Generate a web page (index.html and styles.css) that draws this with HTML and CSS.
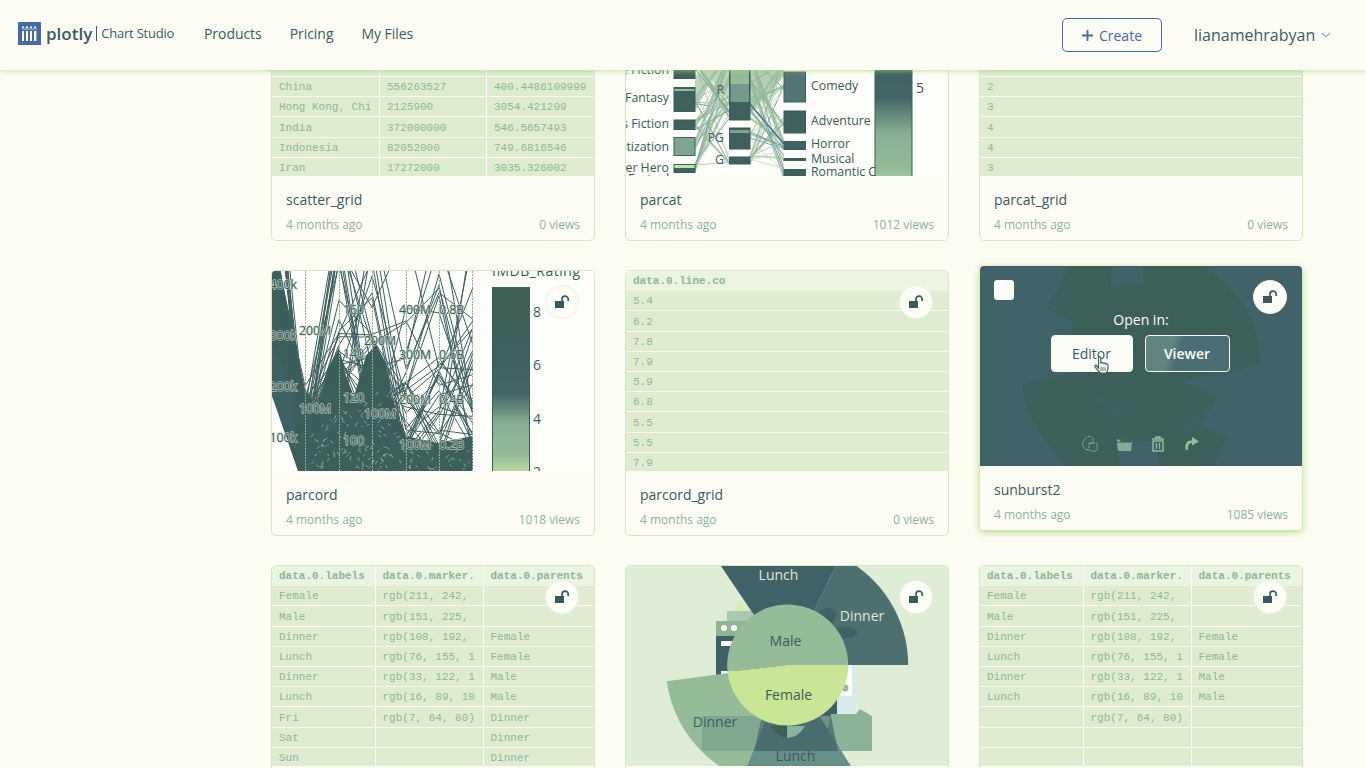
FILE: index.html
```html
<!DOCTYPE html>
<html lang="en">
<head>
<meta charset="utf-8">
<title>Chart Studio</title>
<link rel="stylesheet" href="styles.css">
</head>
<body>
<svg width="0" height="0" class="defs">
  <defs>
    <linearGradient id="scale" x1="0" y1="0" x2="0" y2="1">
      <stop offset="0" stop-color="#3d5f55"/><stop offset=".18" stop-color="#3d5f55"/>
      <stop offset=".4" stop-color="#3e6062"/><stop offset=".56" stop-color="#426567"/>
      <stop offset=".72" stop-color="#88b095"/><stop offset=".88" stop-color="#95bb98"/>
      <stop offset="1" stop-color="#c4e5a0"/>
    </linearGradient>
    <symbol id="lock" viewBox="0 0 16 14">
      <path d="M1 6h9v7H1z" fill="#3b5a5c"/>
      <path d="M8 6V4.200a3.100 3.100 0 0 1 6.200 0V6" fill="none" stroke="#3b5a5c" stroke-width="1.700"/>
    </symbol>
  </defs>
</svg>
<header class="topbar">
  <div class="brand">
    <svg class="logo" viewBox="0 0 23 23"><rect width="23" height="23" fill="#4669a8"/>
      <g fill="#fdfdff"><rect x="4" y="9" width="2" height="10"/><rect x="8" y="9" width="2" height="10"/><rect x="12" y="9" width="2" height="10"/><rect x="16" y="9" width="2.400" height="10"/>
      <rect x="4" y="4.500" width="2" height="1.500"/><rect x="8" y="4.500" width="2" height="1.500"/><rect x="12" y="4.500" width="2" height="1.500"/><rect x="16" y="4.500" width="2" height="1.500"/></g>
      <path d="M4 7h15" stroke="#b5c6e4" stroke-width="1"/></svg>
    <span class="wordmark">plotly</span><span class="product">Chart Studio</span>
  </div>
  <nav class="nav"><a>Products</a><a>Pricing</a><a>My Files</a></nav>
  <button class="create"><svg width="11" height="11" viewBox="0 0 11 11"><path d="M5.500 0v11M0 5.500h11" stroke="#4669a8" stroke-width="1.800"/></svg>Create</button>
  <div class="user"><span>lianamehrabyan</span><svg width="10" height="6" viewBox="0 0 10 6"><path d="M1 1l4 4 4-4" fill="none" stroke="#84ad9a" stroke-width="1.200"/></svg></div>
</header>
<main class="content">
  <div class="grid">
    <article class="card">
      <div class="thumb" data-table="scatter"></div>
      <div class="info"><h2>scatter_grid</h2><p><span>4 months ago</span><span>0 views</span></p></div>
    </article>
    <article class="card">
      <div class="thumb white">
        <svg class="chart" viewBox="0 0 322 200">
          <g id="ribbons" fill="none"></g>
          <g fill="#3e605f" stroke="#3d5f55">
            <rect x="48" y="80" width="21" height="22.500"/><rect x="48" y="111.500" width="21" height="24"/><rect x="48" y="144" width="21" height="9.500"/><rect x="48" y="161.500" width="21" height="18" fill="#7fa494"/><rect x="48" y="188.500" width="21" height="8"/>
            <rect x="103.500" y="60" width="20.500" height="84"/><rect x="103.500" y="152" width="20.500" height="21"/><rect x="103.500" y="181" width="20.500" height="7"/>
            <rect x="158" y="96" width="21.500" height="30" fill="#527675"/><rect x="158" y="135" width="21.500" height="22"/><rect x="158" y="165.500" width="21.500" height="8"/><rect x="158" y="182.500" width="21.500" height="2"/><rect x="158" y="193.500" width="21.500" height="8"/>
          </g>
          <rect x="104.500" y="94" width="18.500" height="14" fill="#95bb98"/><rect x="104.500" y="108" width="18.500" height="18" fill="#76998d"/>
          <rect x="48.500" y="113" width="20" height="2" fill="#95bb98"/><rect x="48.500" y="189" width="20" height="3" fill="#c4e5a0"/><rect x="104" y="154" width="19.500" height="3" fill="#7fa494"/>
          <rect class="bar" x="249" y="-5" width="37" height="226"/>
          <g class="lbl"><g text-anchor="end"><text x="43" y="98">Science Fiction</text><text x="43" y="126">Fantasy</text><text x="43" y="151.500">Kids Fiction</text><text x="43" y="174.500">Dramatization</text><text x="43" y="195.500">Super Hero</text><text x="43" y="207">Factual</text>
          <text x="98" y="117.500">R</text><text x="98" y="165.500">PG</text><text x="98" y="188">G</text></g>
          <text x="185" y="114">Comedy</text><text x="185" y="149">Adventure</text><text x="185" y="172">Horror</text><text x="185" y="187">Musical</text><text x="185" y="200">Romantic C</text></g>
          <text class="tick" x="290" y="117">5</text>
        </svg>
      </div>
      <div class="info"><h2>parcat</h2><p><span>4 months ago</span><span>1012 views</span></p></div>
    </article>
    <article class="card">
      <div class="thumb" data-table="parcat"></div>
      <div class="info"><h2>parcat_grid</h2><p><span>4 months ago</span><span>0 views</span></p></div>
    </article>
    <article class="card">
      <div class="thumb white">
        <svg class="chart" viewBox="0 0 322 200">
          <svg width="201" height="200">
            <path d="M0 0H6L17 42 33 118 45 135 56 100 67 76 74 105 82 125 94 85 104 74 113 90 121 130 134 165 165 172 201 165V200H26L0 125Z" fill="#3d5f5a"/>
            <path d="M0 75L10 95 20 130 25 185 0 125Z" fill="#3f6166"/>
            <g id="lines" fill="none"></g>
            <path d="M33.500 0V200M67.500 0V200M100.500 0V200M134.500 0V200M167.500 0V200M200.500 0V200" stroke="#8fb39a" stroke-dasharray="2 1"/>
          </svg>
          <g class="lbl halo"><g text-anchor="end"><text x="25" y="18">400k</text><text x="25" y="68.500">300k</text><text x="25" y="119.500">200k</text><text x="25" y="170.500">100k</text></g>
          <text x="27" y="64">200M</text><text x="27" y="142">100M</text><text x="71" y="43">160</text><text x="71" y="87">140</text><text x="71" y="131">120</text><text x="71" y="174">100</text>
          <text x="92" y="74">200M</text><text x="92" y="147">100M</text><text x="127" y="43">400M</text><text x="127" y="88">300M</text><text x="127" y="132.500">200M</text><text x="127" y="178">100M</text>
          <text x="167" y="43">0.8B</text><text x="167" y="88">0.6B</text><text x="167" y="132.500">0.4B</text><text x="167" y="178">0.2B</text></g>
          <rect class="bar" x="220.500" y="16.500" width="37" height="190"/>
          <g class="tick"><text x="261" y="45.500">8</text><text x="261" y="99">6</text><text x="261" y="152.500">4</text><text x="261" y="206">2</text><text x="220" y="4.500" textLength="88">IMDB_Rating</text></g>
        </svg>
        <span class="badge"><svg class="lock"><use href="#lock"/></svg></span>
      </div>
      <div class="info"><h2>parcord</h2><p><span>4 months ago</span><span>1018 views</span></p></div>
    </article>
    <article class="card">
      <div class="thumb" data-table="parcord"><span class="badge"><svg class="lock"><use href="#lock"/></svg></span></div>
      <div class="info"><h2>parcord_grid</h2><p><span>4 months ago</span><span>0 views</span></p></div>
    </article>
    <article class="card active">
      <div class="thumb overlay">
        <svg class="chart" viewBox="0 0 322 200"><g fill="#3d5f5a">
          <path d="M67 42L90 0H133L130 20 163 18V0H223Q280 38 280 99L201 115 237 130 220 160 247 170 234 200H178L177 176 137 172 140 200H87Q48 162 42 119L88 107 92 55Z"/></g>
          <path d="M115 130l30 25M205 165l22-22" stroke="#48698b" stroke-width="5" stroke-dasharray="1 2" opacity=".3"/></svg>
        <span class="check"></span>
        <span class="badge"><svg class="lock"><use href="#lock"/></svg></span>
        <div class="actions">
          <div class="open">Open in:</div>
          <div class="buttons"><button class="editor">Editor</button><button class="viewer">Viewer</button></div>
          <div class="tools">
            <svg viewBox="0 0 18 18"><g fill="none" stroke="#95bb98" stroke-dasharray="2 1"><path d="M7 15C2 14 0 9 3 5S10 0 12 4v4H8"/><rect x="8" y="8" width="8" height="8" rx="1"/></g></svg>
            <svg viewBox="0 0 18 18"><path d="M2 4l3 1 1 2h11l-1 9H3L2 9Z" fill="#86ab98"/><path d="M1 7h15" stroke="#3d5f57"/></svg>
            <svg viewBox="0 0 18 18"><path d="M3 4h12M7 4V2h4v2M4 6h10v10H4Z" fill="none" stroke="#95bb98" stroke-width="1.500"/><path d="M7.500 8v6M10.500 8v6" stroke="#95bb98" stroke-width="1.300"/></svg>
            <svg viewBox="0 0 18 18"><path d="M3 15C1 9 4 5 9 5.500V2l7 4.500-7 4V8C6 8 5 10 5 15Z" fill="#95bb98"/></svg>
          </div>
        </div>
        <svg class="cursor" viewBox="0 0 15 18"><path d="M4.500 12V2Q4.500.7 5.600.7T6.800 2V7Q9 5.800 9.500 7.500 11.500 6.500 12 8 14 7.500 14 9.500V13L12.500 17H6L1 11Q.5 9 2 9Z" fill="#fdfdff" stroke="#3d5f55" stroke-width="1.200"/><path d="M7 11v4M9 11v4M11 11v4" stroke="#3d5f55" stroke-width=".8"/></svg>
      </div>
      <div class="info"><h2>sunburst2</h2><p><span>4 months ago</span><span>1085 views</span></p></div>
    </article>
    <article class="card">
      <div class="thumb" data-table="sunA"><span class="badge"><svg class="lock"><use href="#lock"/></svg></span></div>
      <div class="info"></div>
    </article>
    <article class="card">
      <div class="thumb">
        <svg class="chart" viewBox="0 0 322 200">
          <rect width="322" height="200" fill="#dfecd6"/>
          <path d="M112 35l14 6v6h-18Z" fill="#d5eebc"/>
          <rect x="101" y="45" width="40" height="12" fill="#a9c9ad"/><rect x="90" y="55" width="110" height="15" fill="#8fb496"/>
          <rect x="90" y="70" width="131" height="80" fill="#3f6166"/><rect x="95" y="75" width="14" height="5" fill="#fdfdff"/><rect x="95" y="105" width="14" height="5" fill="#fdfdff"/>
          <circle cx="98" cy="62" r="3" fill="#fdfdff"/><circle cx="108" cy="62" r="3" fill="#fdfdff"/>
          <g fill="#7fa494"><rect x="95" y="119" width="22" height="5"/><rect x="95" y="129" width="26" height="5"/><rect x="105" y="139" width="20" height="5"/></g>
          <rect x="208" y="99" width="18" height="31" fill="#fdfdff"/><path d="M226 99h5v49h-20v-18h15Z" fill="#d8edea"/><circle cx="219" cy="122" r="3.500" fill="#95bb98"/>
          <path d="M205 148h25l4-5 12 7v35h-50Z" fill="#8db29a"/>
          <g id="sun"></g>
          <path d="M76 150H136L128 185H76Z" fill="#55797f" opacity=".3"/><path d="M136 150H205L212 185H128Z" fill="#3a5c62" opacity=".65"/>
          <path d="M188 48q16-12 23 0-7 11-3 16 18-8 24 3-10 9-24 3-9-15-20-22Z" fill="#3f6166"/>
          <path d="M144 160h17v12q-8 0-17-12Z" fill="#3d5f55"/><path d="M161 160h18q-7 12-18 12Z" fill="#8db29a"/>
          <g id="core"></g>
          <g class="lbl big" text-anchor="middle"><text x="152.500" y="14" class="pale">Lunch</text><text x="236" y="55" class="pale">Dinner</text><text x="159.500" y="80">Male</text><text x="162.500" y="134">Female</text><text x="89" y="161">Dinner</text><text x="169.500" y="195">Lunch</text></g>
        </svg>
        <span class="badge"><svg class="lock"><use href="#lock"/></svg></span>
      </div>
      <div class="info"></div>
    </article>
    <article class="card">
      <div class="thumb" data-table="sunB"><span class="badge"><svg class="lock"><use href="#lock"/></svg></span></div>
      <div class="info"></div>
    </article>
  </div>
</main>
<script src="app.js"></script>
</body>
</html>
```
FILE: styles.css
```css
* { box-sizing: border-box; }
body { margin: 0; height: 768px; overflow: hidden; display: flex; flex-direction: column; background: #fcfdf2; font-family: "Open Sans", sans-serif; color: #3b5b5c; }
button { font: inherit; margin: 0; padding: 0; }
.defs { position: absolute; }
.topbar { position: relative; z-index: 5; flex: none; height: 70px; padding: 0 35px 3px 18px; display: flex; align-items: center; background: #fdfdf5; box-shadow: 0 1px 5px rgba(172, 212, 120, .7); }
.brand { width: 186px; display: flex; align-items: center; }
.logo { width: 23px; height: 23px; margin-right: 5px; }
.wordmark { font-weight: 600; font-size: 17px; line-height: 20px; margin-right: 4px; }
.product { font-size: 13px; line-height: 15px; border-left: 1px solid #3b5b60; padding-left: 4px; letter-spacing: -.22px; }
.nav { display: flex; gap: 28px; font-size: 14px; line-height: 19px; letter-spacing: -.05px; }
.create { margin-left: auto; width: 100px; height: 34px; margin-top: 3px; border: 1px solid #4669a8; border-radius: 5px; background: transparent; color: #4669a8; display: flex; align-items: center; justify-content: center; gap: 6px; font-size: 14px; }
.user { width: 137px; margin: 3px 0 0 32px; display: flex; align-items: center; justify-content: space-between; font-size: 16px; white-space: nowrap; }
.content { flex: 1; overflow: hidden; padding-left: 271px; }
.grid { display: grid; grid-template-columns: repeat(3, 324px); grid-auto-rows: 266px; gap: 29px 30px; margin-top: -95px; }
.card { border: 1px solid #d3e8c4; border-radius: 5px; background: #fdfdf5; overflow: hidden; display: flex; flex-direction: column; }
.card.active { transform: translateY(-5px); border-color: transparent; background-clip: padding-box; box-shadow: 0 2px 6px rgba(180, 216, 130, .85); }
.thumb { position: relative; height: 200px; flex: none; overflow: hidden; }
.white { background: #fdfdf9; }
.chart { display: block; width: 322px; height: 200px; overflow: hidden; }
.info { padding: 14px 14px 0; }
.info h2 { margin: 0; font-size: 14px; line-height: 19px; font-weight: 400; }
.info p { margin: 8px 0 0; display: flex; justify-content: space-between; font-size: 12px; line-height: 16px; color: #8db39a; }
.row { display: grid; height: 20.2px; gap: 1px; }
.row span { height: 20.2px; padding: 1.3px 0 0 7px; border-bottom: 1px solid #f7faed; background: #dfecd2; color: #8fb596; font: 11px/19px "Liberation Mono", monospace; white-space: pre; overflow: hidden; }
.row.head span { background: #eaf4e0; font-weight: 700; border: 0; }
.wide { grid-template-columns: 107px 106px 107px; }
.three { grid-template-columns: 102.5px 107px 110.5px; }
.one { grid-template-columns: 1fr; }
.badge { position: absolute; top: 14px; right: 15px; width: 34px; height: 34px; border-radius: 50%; background: #fcfdf5; border: 1px solid #eaf1e3; display: flex; align-items: center; justify-content: center; }
.lock { width: 16px; height: 14px; }
.overlay { background: #406268; }
.check { position: absolute; top: 14px; left: 14px; width: 20px; height: 20px; border-radius: 3px; background: #fdfdf8; }
.actions { position: absolute; inset: 0; display: flex; flex-direction: column; align-items: center; color: #fdfdf8; font-size: 14px; }
.open { margin-top: 44px; line-height: 20px; }
.buttons { display: flex; gap: 12px; margin: 5px 2px 0 0; }
.editor, .viewer { height: 37px; border-radius: 4px; border: 1px solid #f4f8ee; }
.editor { width: 82px; background: #fdfdf8; color: #3b5b68; }
.viewer { width: 85px; background: linear-gradient(110deg, #618581 0 30%, #4b6d74 42%); color: #fdfdf8; font-weight: 600; }
.tools { display: flex; gap: 16px; margin: 63px 0 0 0; }
.tools svg { width: 18px; height: 18px; }
.cursor { position: absolute; left: 114px; top: 90px; width: 15px; height: 18px; }
.bar { fill: url(#scale); stroke: #3d5f55; }
.lbl { font-size: 12.3px; fill: #3b5b5c; }
.halo { paint-order: stroke; stroke: #cfdfcf; stroke-width: 1.5px; stroke-opacity: .8; }
.big { font-size: 14px; }
.pale { fill: #dfecd6; }
.tick { font-size: 14px; fill: #3b5b5c; }
```
FILE: app.js
```javascript
const NS = 'http://www.w3.org/2000/svg';
const labels = ['Female', 'Male', 'Dinner', 'Lunch', 'Dinner', 'Lunch'];
const colors = ['rgb(211, 242,', 'rgb(151, 225,', 'rgb(108, 192,', 'rgb(76, 155, 1', 'rgb(33, 122, 1', 'rgb(16, 89, 10', 'rgb(7, 64, 80)', '', ''];
const sunHead = ['data.0.labels', 'data.0.marker.', 'data.0.parents'];
const parentsA = ['', '', 'Female', 'Female', 'Male', 'Male', 'Dinner', 'Dinner', 'Dinner'];
const tables = {
  scatter: { cls: 'wide', rows: [['country', 'pop', 'gdpPercap'], ['Afghanistan', '8425333', '779.4453145'], ['Bahrain', '120447', '9867.084765'], ['Bangladesh', '46886859', '684.2441716'], ['Cambodia', '4693836', '368.4692856001'], ['China', '556263527', '400.4486109999'], ['Hong Kong, Chi', '2125900', '3054.421209'], ['India', '372000000', '546.5657493'], ['Indonesia', '82052000', '749.6816546'], ['Iran', '17272000', '3035.326002']] },
  parcat: { cls: 'one', rows: ['data', '1', '2', '3', '2', '2', '3', '4', '4', '3'].map(v => [v]) },
  parcord: { cls: 'one', rows: ['data.0.line.co', '5.4', '6.2', '7.8', '7.9', '5.9', '6.8', '5.5', '5.5', '7.9'].map(v => [v]) },
  sunA: { cls: 'three', rows: [sunHead].concat(colors.map((c, i) => [[...labels, 'Fri', 'Sat', 'Sun'][i], c, parentsA[i]])) },
  sunB: { cls: 'three', rows: [sunHead].concat(colors.map((c, i) => [labels[i] || '', c, i < 6 ? parentsA[i] : ''])) }
};
document.querySelectorAll('[data-table]').forEach(el => {
  const t = tables[el.dataset.table];
  const box = document.createElement('div');
  t.rows.forEach((r, i) => {
    const row = document.createElement('div');
    row.className = 'row ' + t.cls + (i ? '' : ' head');
    r.forEach(v => { const s = document.createElement('span'); s.textContent = v; row.append(s); });
    box.append(row);
  });
  el.prepend(box);
});

let seed = 11;
const rnd = () => (seed = (seed * 16807) % 2147483647) / 2147483647;
function path(parent, d, stroke, width, opacity, fill) {
  const p = document.createElementNS(NS, 'path');
  p.setAttribute('d', d);
  if (stroke) { p.setAttribute('stroke', stroke); p.setAttribute('stroke-width', width); }
  if (fill) p.setAttribute('fill', fill);
  p.setAttribute('opacity', opacity);
  parent.append(p);
}

// parallel coordinates
const lines = document.getElementById('lines');
const axes = [0, 33, 67, 100, 134, 167, 201];
for (let i = 0; i < 36; i++) {
  const ys = [
    i % 4 ? -60 + rnd() * 60 : -180 + rnd() * 90,
    115 + rnd() * 80,
    i % 3 ? 60 + rnd() * 120 : rnd() * 130 - 80,
    i % 4 ? 60 + rnd() * 120 : rnd() * 130 - 60,
    i % 3 ? 110 + rnd() * 85 : rnd() * 160 - 40,
    i % 3 ? 90 + rnd() * 100 : rnd() * 200 - 60,
    i % 2 ? 130 + rnd() * 60 : rnd() * 190 - 50
  ];
  path(lines, 'M' + ys.map((y, j) => axes[j] + ' ' + y.toFixed(1)).join('L'), '#3d5f5e', 1, 1);
}
for (let i = 0; i < 190; i++) {
  const x = 38 + rnd() * 160, y = 105 + Math.sqrt(rnd()) * 94, s = rnd() < .5 ? 1 : -1;
  path(lines, `M${x} ${y}l${1 + rnd() * 2} ${s * (1 + rnd() * 3)}`, '#dce9df', .7, .75);
}

// parallel categories
const ribbons = document.getElementById('ribbons');
const left = [90, 123, 149, 171, 192], mid = [80, 105, 125, 138, 160, 184], right = [85, 110, 146, 169, 184, 197];
const pick = a => a[Math.floor(rnd() * a.length)] + rnd() * 10 - 5;
for (let i = 0; i < 46; i++) {
  const c = ['#95bb98', '#a9caaa', '#c9dccb', '#6c91a0'][i % 4];
  path(ribbons, `M69 ${pick(left)}L103 ${pick(mid.slice(0, i % 5 ? 4 : 6))}`, c, i % 4 ? 1 : 2, .85);
  path(ribbons, `M124 ${pick(mid)}L158 ${pick(right)}`, c, i % 4 ? 1 : 2, .85);
}
path(ribbons, 'M69 100L103 78 103 125 86 104 69 135Z', null, 0, .6, '#95bb98');
path(ribbons, 'M124 94L158 80V100L124 138Z', null, 0, .7, '#95bb98');
path(ribbons, 'M124 128L158 168', '#4a6f8c', 1.5, 1);

// sunburst
const cx = 161.7, cy = 99;
function wedge(g, a, b, r, fill) {
  const pt = t => `${cx + r * Math.cos(t * Math.PI / 180)} ${cy - r * Math.sin(t * Math.PI / 180)}`;
  path(g, `M${cx} ${cy}L${pt(a)}A${r} ${r} 0 ${b - a > 180 ? 1 : 0} 0 ${pt(b)}Z`, null, 0, 1, fill);
}
const sun = document.getElementById('sun'), core = document.getElementById('core');
wedge(sun, 0, 64, 120.5, '#4c6f70');
wedge(sun, 64, 124, 120.5, '#406267');
wedge(sun, 187.7, 248, 122, '#95bb98');
wedge(sun, 248, 302, 122, '#68908a');
wedge(core, 0, 186.5, 60.5, '#95bb98');
wedge(core, 186.5, 360, 60.5, '#c8e696');
```
